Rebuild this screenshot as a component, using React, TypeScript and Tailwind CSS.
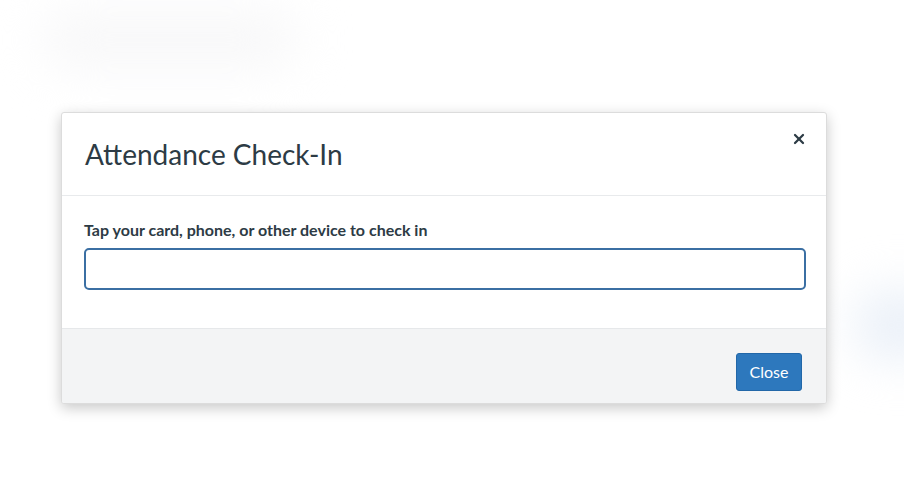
import { X } from "lucide-react";

export default function App() {
  return (
    <main
      className="relative h-[504px] w-[904px] overflow-hidden bg-white"
      style={{ fontFamily: "Lato, 'Noto Sans', sans-serif" }}
    >
      {/* faint blurred page behind the overlay */}
      <div className="absolute left-[40px] top-[10px] h-[60px] w-[260px] rounded-full bg-[#f8f8f9] blur-xl" />
      <div className="absolute right-[-40px] top-[290px] h-[70px] w-[90px] rounded-full bg-[#eaf0f8] blur-xl" />

      <div className="relative pl-[61px] pt-[112px]">
        <section className="w-[766px] overflow-hidden rounded-[3px] border border-[#dcdcdc] bg-white shadow-[0_4px_14px_rgba(0,0,0,0.22)]">
          <header className="flex items-start justify-between border-b border-[#e8eaec] pb-[24px] pl-[23px] pr-[19px] pt-[24px]">
            <h2 className="text-[28px] leading-[34px] font-normal text-[#2d3b45]">
              Attendance Check-In
            </h2>
            <button type="button" className="-mt-[6px] text-[#2d3b45]" aria-label="Close">
              <X size={16} strokeWidth={3.4} />
            </button>
          </header>

          <div className="px-[22px] pb-[38px] pt-[24px]">
            <label className="block text-[16px] leading-[20px] font-bold text-[#2d3b45]">
              Tap your card, phone, or other device to check in
            </label>
            <input
              type="text"
              className="mt-[8px] box-border block h-[42px] w-[722px] rounded-[5px] border-2 border-[#3b6fa3] bg-white px-3 outline-none"
            />
          </div>

          <footer className="flex justify-end border-t border-[#e6e8ea] bg-[#f3f4f5] pb-[12px] pr-[24px] pt-[24px]">
            <button
              type="button"
              className="h-[38px] w-[66px] rounded-[3px] border border-[#2267a8] bg-[#2d78bd] text-[16px] text-white"
            >
              Close
            </button>
          </footer>
        </section>
      </div>
    </main>
  );
}
